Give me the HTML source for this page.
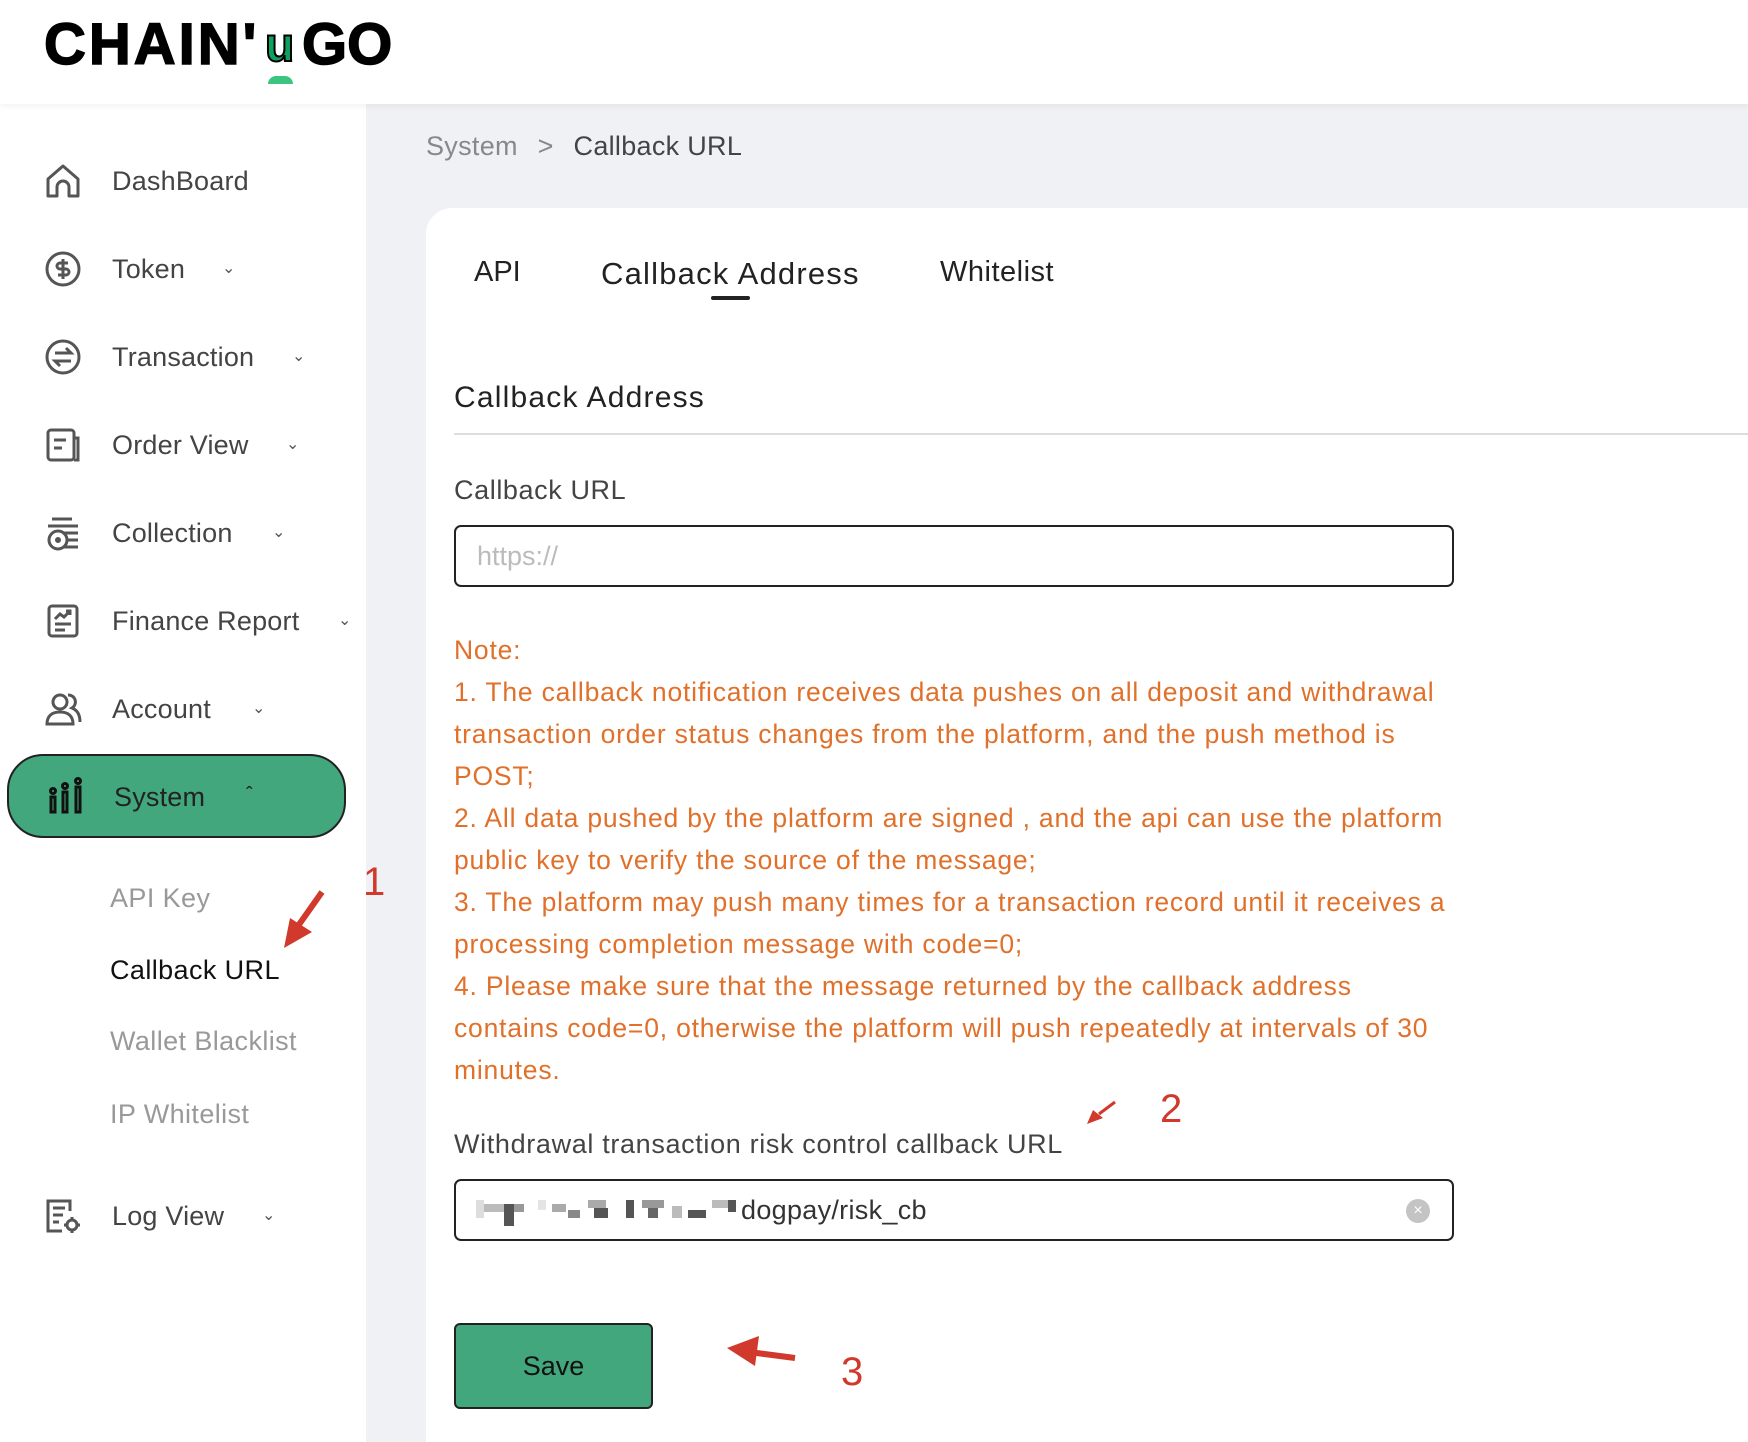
<!DOCTYPE html>
<html><head><meta charset="utf-8"><style>
*{margin:0;padding:0;box-sizing:border-box}
body{width:1748px;height:1442px;overflow:hidden;background:#f0f1f5;font-family:"Liberation Sans",Arial,sans-serif;position:relative}
.a{position:absolute;white-space:nowrap}
#hdr{left:0;top:0;width:1748px;height:104px;background:#fff;box-shadow:0 2px 6px rgba(0,0,0,.06);z-index:2}
#side{left:0;top:104px;width:366px;height:1338px;background:#fff}
.nav{font-size:27px;color:#444;line-height:32px;letter-spacing:.2px}
.ico{position:absolute;left:44px;width:38px;height:38px}
.chev{font-size:16px;color:#555}
.sub{font-size:27px;color:#999;left:110px;letter-spacing:.4px}
#card{left:426px;top:208px;width:1322px;height:1234px;background:#fff;border-radius:26px 0 0 0}
.note{left:454px;font-size:26.5px;color:#e0702a;line-height:32px;letter-spacing:.8px}
.inp{left:454px;width:1000px;border:2px solid #222;border-radius:7px;background:#fff}
.px{position:absolute;height:12px}
.lg{font-size:58px;font-weight:bold;color:#000;-webkit-text-stroke:1.5px #000;line-height:58px}
</style></head><body>
<div id="hdr" class="a">
 <div class="a lg" style="left:44px;top:16px;letter-spacing:3px">CHAIN'</div>
 <div class="a" style="left:265px;top:22px;font-size:48px;font-weight:bold;color:#0fa05f;-webkit-text-stroke:2px #000;line-height:48px">u</div>
 <div class="a lg" style="left:302px;top:16px">GO</div>
 <div class="a" style="left:268px;top:76px;width:25px;height:8px;border-radius:13px 13px 0 0;background:#3cc57f"></div>
</div>
<div id="side" class="a"></div>

<svg class="ico a" style="top:162px" viewBox="0 0 38 38" fill="none" stroke="#555" stroke-width="3"><path d="M4 17 L19 4 L34 17 V34 H25 V25 a6 6 0 0 0-12 0 V34 H4 Z" stroke-linejoin="round"/></svg>
<div class="a nav" style="left:112px;top:165px">DashBoard</div>

<svg class="ico a" style="top:250px" viewBox="0 0 38 38" fill="none" stroke="#555" stroke-width="3"><circle cx="19" cy="19" r="16"/><path d="M24 13 H16 a3 3 0 0 0 0 6 h6 a3 3 0 0 1 0 6 H14 M19 9 v20"/></svg>
<div class="a nav" style="left:112px;top:253px">Token</div><div class="a chev" style="left:222px;top:258px">&#8964;</div>

<svg class="ico a" style="top:338px" viewBox="0 0 38 38" fill="none" stroke="#555" stroke-width="3"><circle cx="19" cy="19" r="16"/><path d="M11 15 H27 L22 10 M27 23 H11 L16 28"/></svg>
<div class="a nav" style="left:112px;top:341px">Transaction</div><div class="a chev" style="left:292px;top:346px">&#8964;</div>

<svg class="ico a" style="top:426px" viewBox="0 0 38 38" fill="none" stroke="#555" stroke-width="3"><rect x="4" y="4" width="26" height="30" rx="3"/><path d="M30 12 h4 v22 h-4 M10 14 h12 M10 22 h8"/></svg>
<div class="a nav" style="left:112px;top:429px">Order View</div><div class="a chev" style="left:286px;top:434px">&#8964;</div>

<svg class="ico a" style="top:514px" viewBox="0 0 38 38" fill="none" stroke="#555" stroke-width="3"><path d="M8 5 H28 M4 12 H34"/><circle cx="14" cy="26" r="9"/><circle cx="14" cy="26" r="1.5" fill="#555"/><path d="M20 19 H34 M23 26 H34 M20 33 H34"/></svg>
<div class="a nav" style="left:112px;top:517px">Collection</div><div class="a chev" style="left:272px;top:522px">&#8964;</div>

<svg class="ico a" style="top:602px" viewBox="0 0 38 38" fill="none" stroke="#555" stroke-width="3"><rect x="5" y="4" width="28" height="30" rx="3"/><path d="M11 17 l5-5 4 3 6-6 M22 9 h4 v4 M11 22 h16 M11 28 h10"/></svg>
<div class="a nav" style="left:112px;top:605px">Finance Report</div><div class="a chev" style="left:338px;top:610px">&#8964;</div>

<svg class="ico a" style="top:690px" viewBox="0 0 38 38" fill="none" stroke="#555" stroke-width="3"><circle cx="16" cy="12" r="7"/><path d="M3 34 c0-8 5-12 13-12 s13 4 13 12 Z M24 5 a7 7 0 0 1 4 13 c5 2 8 6 8 14"/></svg>
<div class="a nav" style="left:112px;top:693px">Account</div><div class="a chev" style="left:252px;top:698px">&#8964;</div>

<div class="a" style="left:7px;top:754px;width:339px;height:84px;background:#42a77d;border:2px solid #222;border-radius:36px"></div>
<svg class="a" style="left:48px;top:777px;width:36px;height:38px" viewBox="0 0 36 38" fill="none" stroke="#111" stroke-width="3"><circle cx="5" cy="14" r="2.5"/><rect x="3" y="20" width="4" height="15"/><circle cx="17" cy="9" r="2.5"/><rect x="15" y="15" width="4" height="20"/><circle cx="30" cy="4" r="2.5"/><rect x="28" y="10" width="4" height="25"/></svg>
<div class="a nav" style="left:114px;top:781px;color:#222">System</div><div class="a" style="left:246px;top:784px;font-size:20px;color:#222">&#710;</div>

<div class="a sub" style="top:883px">API Key</div>
<div class="a sub" style="top:955px;color:#111">Callback URL</div>
<div class="a sub" style="top:1026px">Wallet Blacklist</div>
<div class="a sub" style="top:1099px">IP Whitelist</div>

<svg class="ico a" style="top:1197px" viewBox="0 0 38 38" fill="none" stroke="#555" stroke-width="3"><path d="M26 14 V4 H4 V34 H18 M9 11 h12 M9 18 h10 M9 25 h6"/><circle cx="28" cy="28" r="5"/><path d="M28 20 v3 M28 33 v3 M20 28 h3 M33 28 h3"/></svg>
<div class="a nav" style="left:112px;top:1200px">Log View</div><div class="a chev" style="left:262px;top:1205px">&#8964;</div>

<div class="a" style="left:363px;top:860px;font-size:40px;color:#d0392b">1</div>
<svg class="a" style="left:280px;top:888px;width:50px;height:62px" viewBox="0 0 50 62"><path d="M42 4 L18 38" stroke="#d0392b" stroke-width="6"/><path d="M4 60 L10 30 L32 44 Z" fill="#d0392b"/></svg>

<div class="a" style="left:426px;top:131px;font-size:27px;color:#888;letter-spacing:.3px">System <span style="margin:0 12px">&gt;</span> <span style="color:#444">Callback URL</span></div>
<div id="card" class="a"></div>
<div class="a" style="left:474px;top:256px;font-size:29px;color:#222">API</div>
<div class="a" style="left:601px;top:256px;font-size:31px;color:#222;letter-spacing:1.2px">Callback Address</div>
<div class="a" style="left:711px;top:296px;width:39px;height:4px;border-radius:2px;background:#222"></div>
<div class="a" style="left:940px;top:256px;font-size:29px;color:#222;letter-spacing:.5px">Whitelist</div>

<div class="a" style="left:454px;top:381px;font-size:30px;color:#222;letter-spacing:1.2px">Callback Address</div>
<div class="a" style="left:454px;top:433px;width:1294px;height:2px;background:#ddd"></div>
<div class="a" style="left:454px;top:475px;font-size:27px;color:#444;letter-spacing:.6px">Callback URL</div>
<div class="a inp" style="top:525px;height:62px"></div>
<div class="a" style="left:477px;top:541px;font-size:27px;color:#bbb">https://</div>

<div class="a note" style="top:634px">Note:</div>
<div class="a note" style="top:676px">1. The callback notification receives data pushes on all deposit and withdrawal</div>
<div class="a note" style="top:718px">transaction order status changes from the platform, and the push method is</div>
<div class="a note" style="top:760px">POST;</div>
<div class="a note" style="top:802px">2. All data pushed by the platform are signed , and the api can use the platform</div>
<div class="a note" style="top:844px">public key to verify the source of the message;</div>
<div class="a note" style="top:886px">3. The platform may push many times for a transaction record until it receives a</div>
<div class="a note" style="top:928px">processing completion message with code=0;</div>
<div class="a note" style="top:970px">4. Please make sure that the message returned by the callback address</div>
<div class="a note" style="top:1012px">contains code=0, otherwise the platform will push repeatedly at intervals of 30</div>
<div class="a note" style="top:1054px">minutes.</div>

<div class="a" style="left:454px;top:1129px;font-size:27px;color:#444;letter-spacing:.65px">Withdrawal transaction risk control callback URL</div>
<svg class="a" style="left:1085px;top:1100px;width:32px;height:26px" viewBox="0 0 32 26"><path d="M30 2 L14 14" stroke="#d0392b" stroke-width="3"/><path d="M2 24 L8 10 L18 18 Z" fill="#d0392b"/></svg>
<div class="a" style="left:1160px;top:1087px;font-size:40px;color:#d0392b">2</div>

<div class="a inp" style="top:1179px;height:62px"></div>
<div class="a" style="left:476px;top:1198px;width:264px;height:30px">
 <div class="px" style="left:0;top:2px;width:8px;height:18px;background:#ddd"></div>
 <div class="px" style="left:8px;top:6px;width:20px;height:8px;background:#bbb"></div>
 <div class="px" style="left:28px;top:6px;width:10px;height:22px;background:#555"></div>
 <div class="px" style="left:38px;top:6px;width:10px;height:8px;background:#999"></div>
 <div class="px" style="left:62px;top:2px;width:8px;height:10px;background:#e4e4e4"></div>
 <div class="px" style="left:76px;top:6px;width:14px;height:8px;background:#aaa"></div>
 <div class="px" style="left:92px;top:12px;width:12px;height:8px;background:#888"></div>
 <div class="px" style="left:112px;top:2px;width:18px;height:8px;background:#aaa"></div>
 <div class="px" style="left:118px;top:10px;width:14px;height:10px;background:#555"></div>
 <div class="px" style="left:150px;top:2px;width:8px;height:18px;background:#555"></div>
 <div class="px" style="left:166px;top:2px;width:22px;height:8px;background:#999"></div>
 <div class="px" style="left:172px;top:10px;width:10px;height:10px;background:#666"></div>
 <div class="px" style="left:196px;top:8px;width:10px;height:12px;background:#bbb"></div>
 <div class="px" style="left:212px;top:12px;width:18px;height:8px;background:#555"></div>
 <div class="px" style="left:236px;top:2px;width:16px;height:8px;background:#bbb"></div>
 <div class="px" style="left:252px;top:2px;width:8px;height:12px;background:#555"></div>
</div>
<div class="a" style="left:741px;top:1195px;font-size:27px;color:#333;letter-spacing:.3px">dogpay/risk_cb</div>
<div class="a" style="left:1406px;top:1199px;width:24px;height:24px;border-radius:50%;background:#c4c4c4;color:#fff;font-size:16px;line-height:24px;text-align:center">&#215;</div>

<div class="a" style="left:454px;top:1323px;width:199px;height:86px;background:#42a77d;border:2px solid #222;border-radius:6px;font-size:27px;color:#111;text-align:center;line-height:82px">Save</div>
<svg class="a" style="left:725px;top:1336px;width:72px;height:36px" viewBox="0 0 72 36"><path d="M70 22 L24 16" stroke="#d0392b" stroke-width="6"/><path d="M2 12 L34 0 L30 30 Z" fill="#d0392b"/></svg>
<div class="a" style="left:841px;top:1350px;font-size:40px;color:#d0392b">3</div>
</body></html>
